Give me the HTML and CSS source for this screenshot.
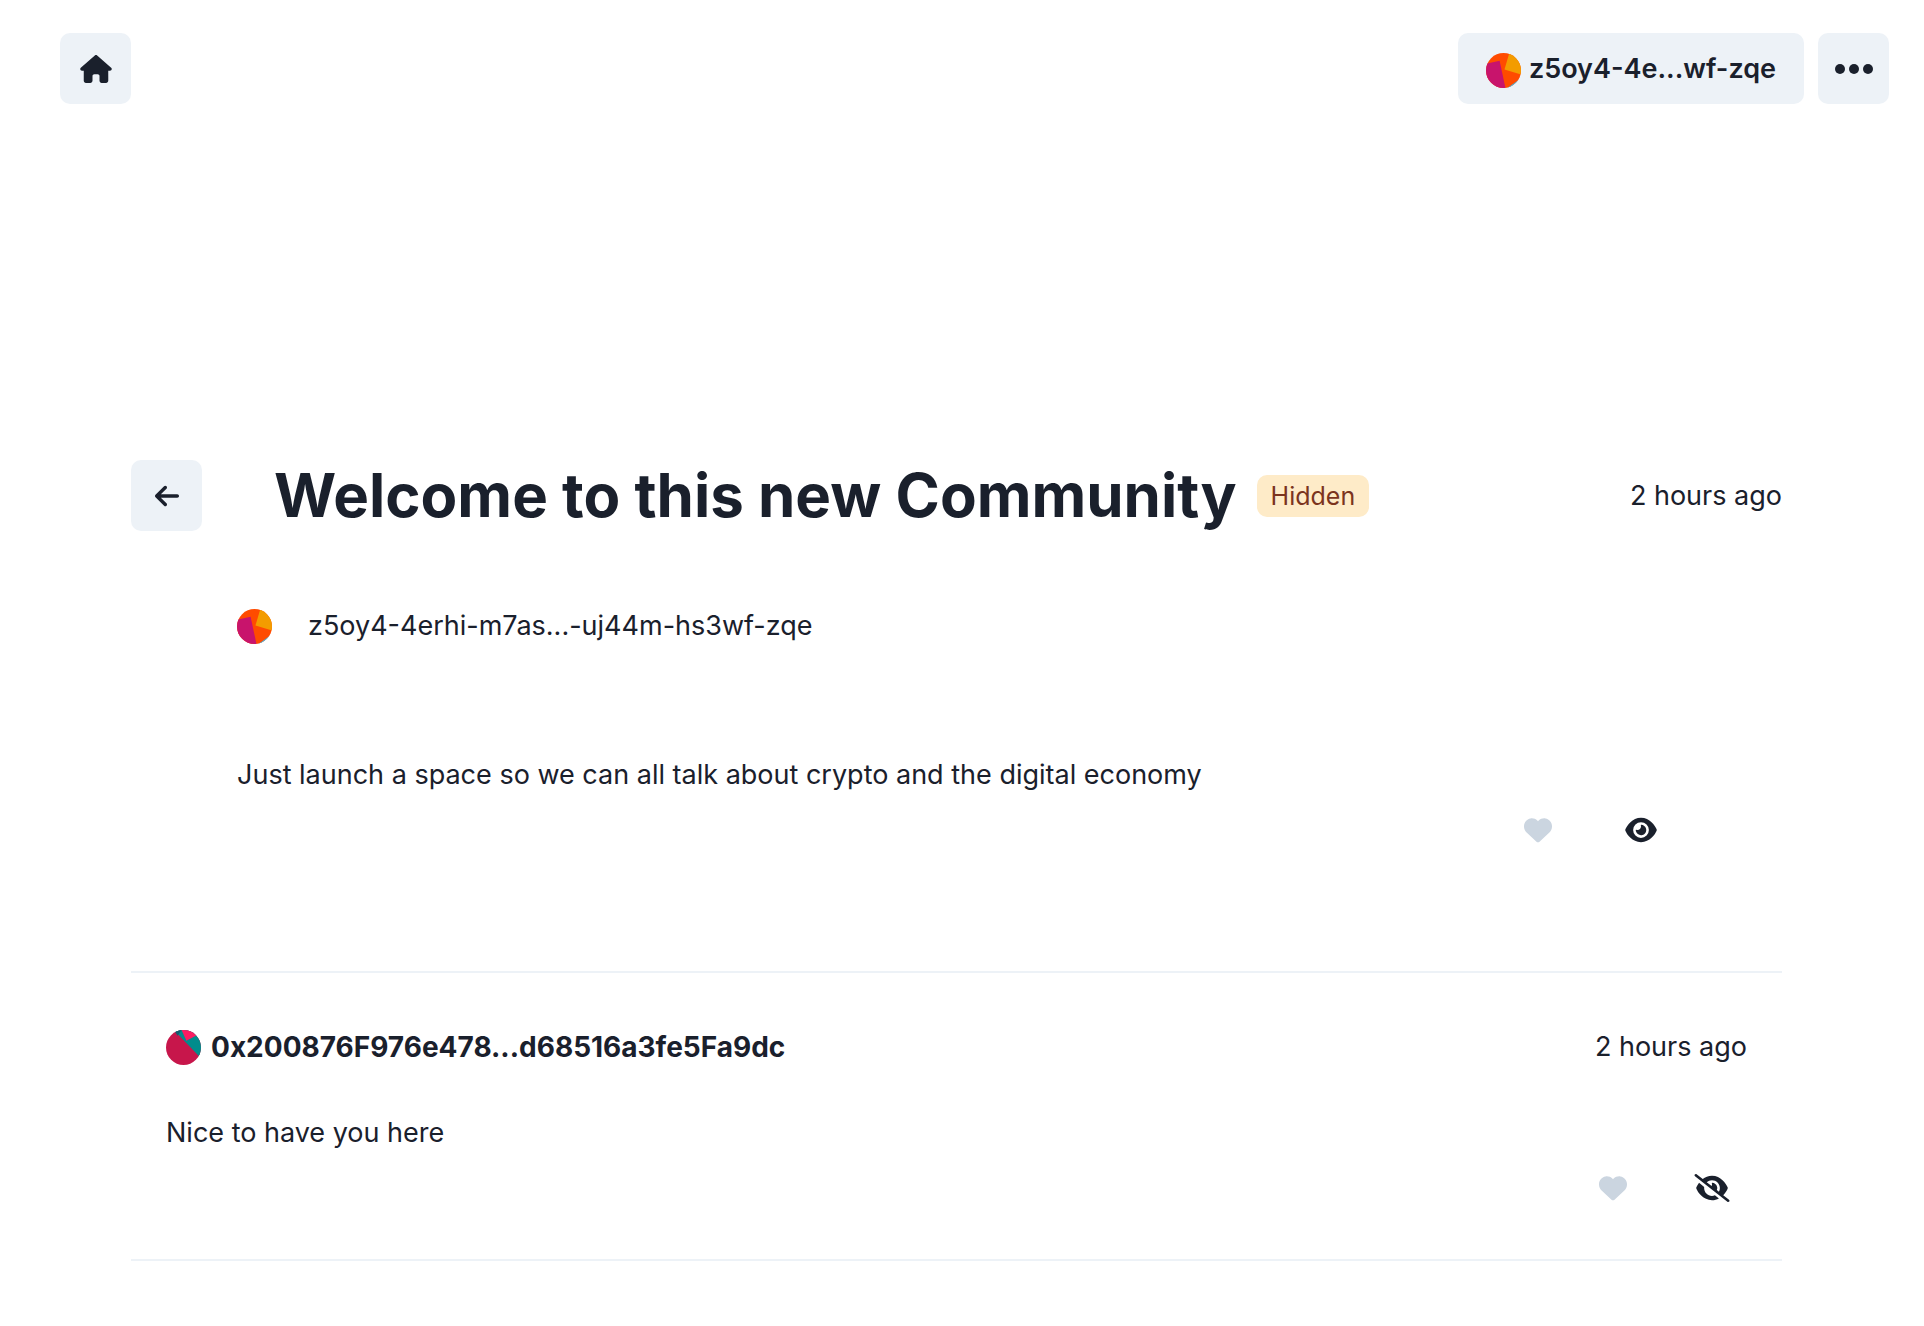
FILE: index.html
```html
<!DOCTYPE html>
<html lang="en">
<head>
<meta charset="utf-8">
<meta name="viewport" content="width=device-width, initial-scale=1">
<title>Welcome to this new Community</title>
<link rel="stylesheet" href="styles.css">
</head>
<body>
<svg class="defs" aria-hidden="true">
  <symbol id="heart" viewBox="0 0 512 512"><path d="M47.6 300.4L228.3 469.1c7.5 7 17.4 10.9 27.7 10.9s20.2-3.9 27.7-10.9L464.4 300.4c30.4-28.3 47.6-68 47.6-109.5v-5.8c0-69.9-50.5-129.5-119.4-141C347 36.5 300.6 51.4 268 84L256 96 244 84c-32.6-32.6-79-47.5-124.6-39.9C50.5 55.6 0 115.2 0 185.1v5.8c0 41.5 17.2 81.2 47.6 109.5z"/></symbol>
  <symbol id="avatar-post" viewBox="0 0 36 36">
    <clipPath id="disc"><circle cx="18" cy="18" r="18"/></clipPath>
    <g clip-path="url(#disc)">
      <path fill="#ff4b00" d="M0 0h36v36H0z"/>
      <path fill="#f39c00" d="M24 0L19 17l17 5V0z"/>
      <path fill="#c8146c" d="M0 11l14-3 6 28H0z"/>
      <path fill="#35bdf2" d="M36 26L22 36h14z"/>
    </g>
  </symbol>
  <symbol id="avatar-comment" viewBox="0 0 36 36">
    <g clip-path="url(#disc)">
      <path fill="#c7164b" d="M0 0h36v36H0z"/>
      <path fill="#018c8c" d="M8 0L36 29V0z"/>
      <path fill="#fb1c62" d="M16 0l5 11 15-8V0z"/>
      <path fill="#145c6e" d="M8 0l4 6 4-6z"/>
    </g>
  </symbol>
</svg>

<header class="topbar">
  <button class="btn btn-icon" type="button" aria-label="Home">
    <svg class="icon icon-wide" viewBox="0 0 576 512" aria-hidden="true"><path d="M575.8 255.5c0 18-15 32.1-32 32.1h-32l.7 160.2c0 2.7-.2 5.4-.5 8.1V472c0 22.1-17.9 40-40 40H456c-1.1 0-2.2 0-3.3-.1c-1.4 .1-2.8 .1-4.2 .1H416 392c-22.1 0-40-17.9-40-40V448 384c0-17.7-14.3-32-32-32H256c-17.7 0-32 14.3-32 32v64 24c0 22.1-17.9 40-40 40H160 128.1c-1.5 0-3-.1-4.5-.2c-1.2 .1-2.4 .2-3.6 .2H104c-22.1 0-40-17.9-40-40V360c0-.9 0-1.9 .1-2.8V287.6H32c-18 0-32-14-32-32.1c0-9 3-17 10-24L266.4 8c7-7 15-8 22-8s15 2 21 7L564.8 231.5c8 7 12 15 11 24z"/></svg>
  </button>
  <div class="account">
    <button class="btn btn-account" type="button"><svg class="avatar" aria-hidden="true"><use href="#avatar-post"/></svg><span>z5oy4-4e...wf-zqe</span></button>
    <button class="btn btn-icon" type="button" aria-label="More options">
      <svg class="icon icon-dots" viewBox="0 0 38 28" aria-hidden="true"><circle cx="5" cy="14" r="5"/><circle cx="19" cy="14" r="5"/><circle cx="33" cy="14" r="5"/></svg>
    </button>
  </div>
</header>

<main class="content">
  <article class="post">
    <div class="post-head">
      <button class="btn btn-icon" type="button" aria-label="Back">
        <svg class="icon icon-narrow" viewBox="0 0 448 512" aria-hidden="true"><path d="M9.4 233.4c-12.5 12.5-12.5 32.8 0 45.3l160 160c12.5 12.5 32.8 12.5 45.3 0s12.5-32.8 0-45.3L109.2 288 416 288c17.7 0 32-14.3 32-32s-14.3-32-32-32l-306.7 0L214.6 118.6c12.5-12.5 12.5-32.8 0-45.3s-32.8-12.5-45.3 0l-160 160z"/></svg>
      </button>
      <div class="title-group">
        <h1>Welcome to this new Community</h1>
        <span class="badge">Hidden</span>
      </div>
      <time>2 hours ago</time>
    </div>
    <div class="post-body">
      <div class="author">
        <svg class="avatar" aria-hidden="true"><use href="#avatar-post"/></svg>
        <span>z5oy4-4erhi-m7as...-uj44m-hs3wf-zqe</span>
      </div>
      <p>Just launch a space so we can all talk about crypto and the digital economy</p>
    </div>
    <div class="actions">
      <button class="action like" type="button" aria-label="Like"><svg class="icon" aria-hidden="true"><use href="#heart"/></svg></button>
      <button class="action" type="button" aria-label="Show post">
        <svg class="icon icon-wide" viewBox="0 0 576 512" aria-hidden="true"><path d="M288 32c-80.8 0-145.5 36.8-192.6 80.6C48.6 156 17.3 208 2.5 243.7c-3.3 7.9-3.3 16.7 0 24.6C17.3 304 48.6 356 95.4 399.4C142.5 443.2 207.2 480 288 480s145.5-36.8 192.6-80.6c46.8-43.5 78.1-95.4 93-131.1c3.3-7.9 3.3-16.7 0-24.6c-14.9-35.7-46.2-87.7-93-131.1C433.5 68.8 368.8 32 288 32zM144 256a144 144 0 1 1 288 0 144 144 0 1 1 -288 0zm144-64c0 35.3-28.7 64-64 64c-7.1 0-13.9-1.2-20.3-3.3c-5.5-1.8-11.9 1.6-11.7 7.4c.3 6.9 1.3 13.8 3.2 20.7c13.7 51.2 66.4 81.6 117.6 67.9s81.6-66.4 67.9-117.6c-11.1-41.5-47.8-69.4-88.6-71.1c-5.8-.2-9.2 6.1-7.4 11.7c2.1 6.4 3.3 13.2 3.3 20.3z"/></svg>
      </button>
    </div>
  </article>

  <article class="comment">
    <div class="comment-head">
      <svg class="avatar" aria-hidden="true"><use href="#avatar-comment"/></svg>
      <strong>0x200876F976e478...d68516a3fe5Fa9dc</strong>
      <time>2 hours ago</time>
    </div>
    <p>Nice to have you here</p>
    <div class="actions">
      <button class="action like" type="button" aria-label="Like"><svg class="icon" aria-hidden="true"><use href="#heart"/></svg></button>
      <button class="action" type="button" aria-label="Hide comment">
        <svg class="icon icon-slash" viewBox="0 0 640 512" aria-hidden="true"><path d="M38.8 5.1C28.4-3.1 13.3-1.2 5.1 9.2S-1.2 34.7 9.2 42.9l592 464c10.4 8.2 25.5 6.3 33.7-4.1s6.3-25.5-4.1-33.7L525.6 386.7c39.6-40.6 66.4-86.1 79.9-118.4c3.3-7.9 3.3-16.7 0-24.6c-14.9-35.7-46.2-87.7-93-131.1C465.5 68.8 400.8 32 320 32c-68.2 0-125 26.3-169.3 60.8L38.8 5.1zM223.1 149.5C248.6 126.2 282.7 112 320 112c79.5 0 144 64.5 144 144c0 24.9-6.3 48.3-17.4 68.7L408 294.5c8.4-19.3 10.6-41.4 4.8-63.3c-11.1-41.5-47.8-69.4-88.6-71.1c-5.8-.2-9.2 6.1-7.4 11.7c2.1 6.4 3.3 13.2 3.3 20.3c0 10.2-2.4 19.8-6.6 28.3l-90.3-70.8zM373 389.9c-16.4 6.5-34.3 10.1-53 10.1c-79.5 0-144-64.5-144-144c0-6.9 .5-13.6 1.4-20.2L83.1 161.5C60.3 191.2 44 220.8 34.5 243.7c-3.3 7.9-3.3 16.7 0 24.6c14.9 35.7 46.2 87.7 93 131.1C174.5 443.2 239.2 480 320 480c47.8 0 89.9-12.9 126.2-32.5L373 389.9z"/></svg>
      </button>
    </div>
  </article>
</main>
</body>
</html>
```
FILE: styles.css
```css
* { box-sizing: border-box; }

body {
  margin: 0;
  background: #fff;
  color: #1a202c;
  font-family: Inter, "Liberation Sans", sans-serif;
  font-size: 27px;
  line-height: 42px;
}

h1, p { margin: 0; }

.defs { position: absolute; width: 0; height: 0; }

.icon { display: block; width: 28px; height: 28px; fill: currentColor; }
.icon-wide { width: 32px; }
.icon-narrow { width: 24px; }
.icon-dots { width: 38px; }
.icon-slash { width: 36px; }

.avatar { display: block; width: 35px; height: 35px; flex: none; }

.btn {
  height: 71px;
  padding: 0;
  border: 0;
  border-radius: 10px;
  background: #edf2f7;
  color: inherit;
  font: inherit;
  font-weight: 600;
  cursor: pointer;
}
.btn-icon {
  display: flex;
  align-items: center;
  justify-content: center;
  flex: none;
  width: 71px;
}
.btn-account { padding: 0 28px; }
.btn-account .avatar {
  display: inline-block;
  margin-right: 8px;
  vertical-align: middle;
}

.topbar {
  display: flex;
  justify-content: space-between;
  padding: 33px 35px 0 60px;
}
.account { display: flex; gap: 14px; }

.content { margin: 356px 142px 0 131px; }

.post { border-bottom: 2px solid #edf2f7; padding-bottom: 127px; }
.post-head { display: flex; align-items: center; }
.title-group { display: flex; align-items: center; gap: 20px; margin-left: 72px; }
h1 { font-size: 60px; line-height: 71px; font-weight: 700; }
.badge {
  padding: 0 14px;
  border-radius: 10px;
  background: #feebc8;
  color: #7b341e;
  font-size: 25px;
}
time { margin-left: auto; }

.post-body { padding: 74px 106px 0; }
.author { display: flex; align-items: center; gap: 36px; }
.post-body p { margin-top: 107px; }

.actions { display: flex; justify-content: flex-end; }
.action {
  padding: 0;
  border: 0;
  background: none;
  color: inherit;
  cursor: pointer;
}
.like { color: #cbd5e0; }
.post .actions { gap: 73px; padding: 20px 125px 0 0; }

.comment { padding: 53px 35px 57px; border-bottom: 2px solid #edf2f7; }
.comment-head { display: flex; align-items: center; gap: 10px; }
.comment p { margin-top: 44px; }
.comment .actions { gap: 67px; padding: 20px 17px 0 0; }
strong { font-size: 28px; font-weight: 700; }
```
